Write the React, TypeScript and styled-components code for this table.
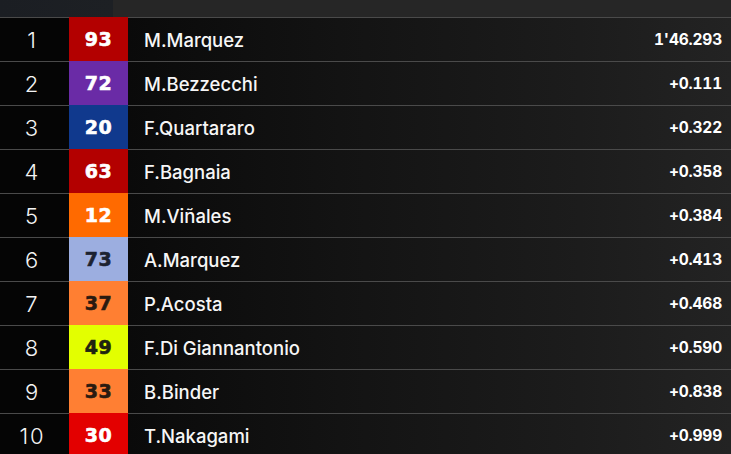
import React from 'react'
import styled, { createGlobalStyle } from 'styled-components'

const GlobalStyle = createGlobalStyle`
  html, body {
    margin: 0;
    padding: 0;
    background: #050505;
  }
  body {
    width: 731px;
    height: 454px;
    overflow: hidden;
    font-family: Inter, "Liberation Sans", sans-serif;
  }
`

const StyledBoard = styled.div`
  display: flex;
  flex-direction: column;
  width: 731px;
  height: 454px;
  overflow: hidden;
  background: #050505;
`

const StyledTopStrip = styled.div`
  display: flex;
  height: 17px;
  flex-shrink: 0;

  .left {
    width: 113px;
    background: linear-gradient(90deg, #1b1e23 0%, #1d2024 100%);
  }
  .right {
    flex: 1;
    background: #262626;
  }
`

const StyledRow = styled.div`
  display: flex;
  height: 44px;
  box-sizing: border-box;
  flex-shrink: 0;
  border-top: 1px solid #4a4a4a;

  &:first-of-type {
    border-top: none;
  }
`

const StyledPos = styled.div`
  width: 69px;
  display: flex;
  align-items: center;
  justify-content: center;
  padding-right: 4px;
  box-sizing: border-box;
  color: #f4f4f4;
  font-family: Inter, "DejaVu Sans", sans-serif;
  font-weight: 300;
  font-size: 22px;
  letter-spacing: 2px;
  background: #050505;
`

const StyledNumber = styled.div<{ $bg: string; $fg: string }>`
  width: 59px;
  margin-top: -1px;
  display: flex;
  align-items: center;
  justify-content: center;
  background: ${props => props.$bg};
  color: ${props => props.$fg};
  font-family: "DejaVu Sans", Inter, sans-serif;
  font-weight: 700;
  font-size: 19px;
  letter-spacing: 0.5px;
  -webkit-text-stroke: 0.6px currentColor;
`

const StyledInfo = styled.div`
  flex: 1;
  display: flex;
  align-items: center;
  justify-content: space-between;
  padding: 0 9px 0 16px;
  background: linear-gradient(90deg, #0a0a0a 0%, #131313 35%, #1c1c1c 75%, #232323 100%);
`

const StyledName = styled.div`
  color: #f6f6f6;
  font-family: Inter, "Liberation Sans", sans-serif;
  font-weight: 500;
  font-size: 18.5px;
`

const StyledTime = styled.div`
  color: #ffffff;
  font-family: Inter, "Liberation Sans", sans-serif;
  font-weight: 700;
  font-size: 15.5px;
  font-variant-numeric: tabular-nums;
  letter-spacing: -0.2px;
`

interface RiderProps {
  pos: number
  num: string
  name: string
  time: string
  bg: string
  fg: string
}

const riders: RiderProps[] = [
  { pos: 1, num: '93', name: 'M.Marquez', time: "1'46.293", bg: '#b30000', fg: '#ffffff' },
  { pos: 2, num: '72', name: 'M.Bezzecchi', time: '+0.111', bg: '#6a2ba6', fg: '#ffffff' },
  { pos: 3, num: '20', name: 'F.Quartararo', time: '+0.322', bg: '#10398d', fg: '#ffffff' },
  { pos: 4, num: '63', name: 'F.Bagnaia', time: '+0.358', bg: '#b30000', fg: '#ffffff' },
  { pos: 5, num: '12', name: 'M.Viñales', time: '+0.384', bg: '#ff6a00', fg: '#ffffff' },
  { pos: 6, num: '73', name: 'A.Marquez', time: '+0.413', bg: '#9caee0', fg: '#1c2230' },
  { pos: 7, num: '37', name: 'P.Acosta', time: '+0.468', bg: '#ff7f32', fg: '#2a1a10' },
  { pos: 8, num: '49', name: 'F.Di Giannantonio', time: '+0.590', bg: '#e3ff00', fg: '#1e2410' },
  { pos: 9, num: '33', name: 'B.Binder', time: '+0.838', bg: '#ff7f33', fg: '#2a1a10' },
  { pos: 10, num: '30', name: 'T.Nakagami', time: '+0.999', bg: '#e30000', fg: '#ffffff' },
]

const App = () => {
  return (
    <>
      <GlobalStyle />
      <StyledBoard>
        <StyledTopStrip>
          <div className='left' />
          <div className='right' />
        </StyledTopStrip>
        {riders.map((r: RiderProps) => (
          <StyledRow key={r.pos}>
            <StyledPos>{r.pos}</StyledPos>
            <StyledNumber $bg={r.bg} $fg={r.fg}>{r.num}</StyledNumber>
            <StyledInfo>
              <StyledName>{r.name}</StyledName>
              <StyledTime>{r.time}</StyledTime>
            </StyledInfo>
          </StyledRow>
        ))}
      </StyledBoard>
    </>
  )
}

export default App
